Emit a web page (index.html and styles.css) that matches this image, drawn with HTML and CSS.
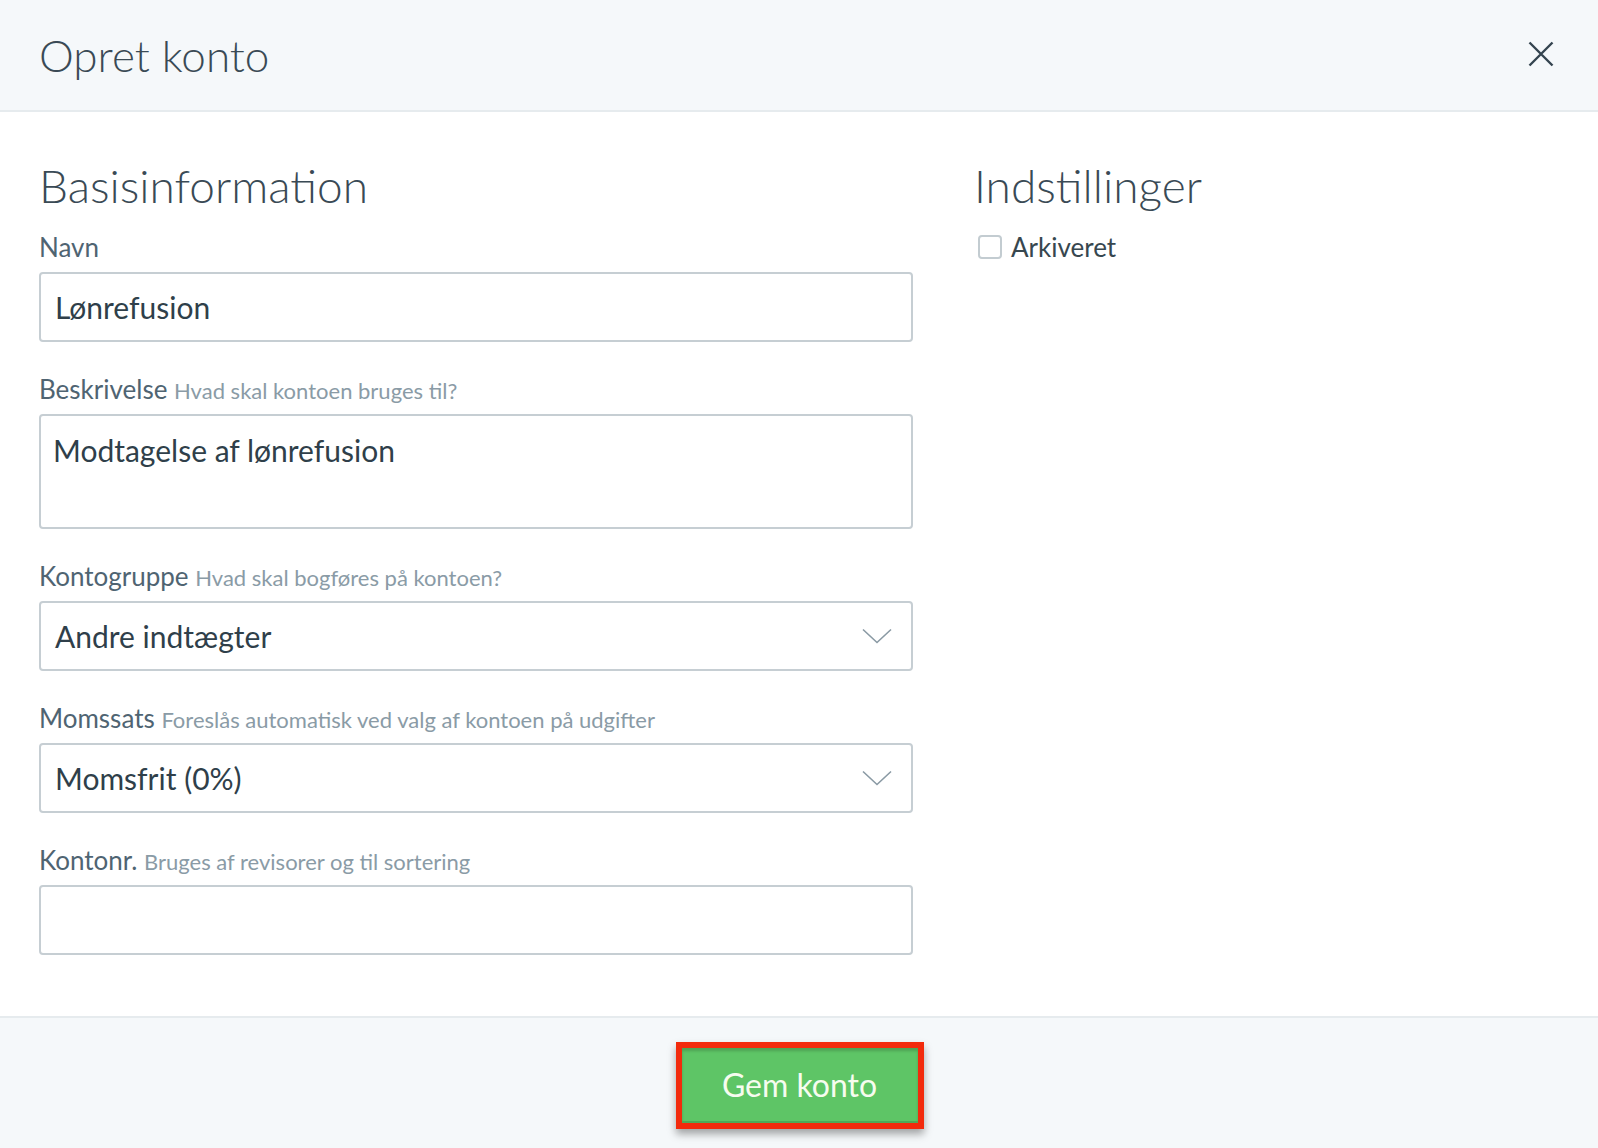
FILE: index.html
```html
<!DOCTYPE html>
<html lang="da">
<head>
<meta charset="utf-8">
<title>Opret konto</title>
<link rel="stylesheet" href="styles.css">
</head>
<body>
<div class="modal">
  <header class="modal-header">
    <h1 class="modal-title">Opret konto</h1>
    <button class="close" aria-label="Luk">
      <svg width="26" height="26" viewBox="0 0 26 26"><path d="M1.5 1.5 L24.5 24.5 M24.5 1.5 L1.5 24.5" stroke="#34444f" stroke-width="2.4" fill="none"/></svg>
    </button>
  </header>
  <main class="modal-body">
    <section class="col-left">
      <h2 class="section-title">Basisinformation</h2>
      <div class="field">
        <label class="label">Navn</label>
        <div class="input">Lønrefusion</div>
      </div>
      <div class="field">
        <label class="label">Beskrivelse <span class="hint">Hvad skal kontoen bruges til?</span></label>
        <div class="input textarea">Modtagelse af lønrefusion</div>
      </div>
      <div class="field">
        <label class="label">Kontogruppe <span class="hint">Hvad skal bogføres på kontoen?</span></label>
        <div class="input select">Andre indtægter
          <svg class="chevron" width="30" height="16" viewBox="0 0 30 16"><path d="M1 1.5 L15 14.5 L29 1.5" stroke="#8a9aa4" stroke-width="1.6" fill="none"/></svg>
        </div>
      </div>
      <div class="field">
        <label class="label">Momssats <span class="hint">Foreslås automatisk ved valg af kontoen på udgifter</span></label>
        <div class="input select">Momsfrit (0%)
          <svg class="chevron" width="30" height="16" viewBox="0 0 30 16"><path d="M1 1.5 L15 14.5 L29 1.5" stroke="#8a9aa4" stroke-width="1.6" fill="none"/></svg>
        </div>
      </div>
      <div class="field">
        <label class="label">Kontonr. <span class="hint">Bruges af revisorer og til sortering</span></label>
        <div class="input"></div>
      </div>
    </section>
    <section class="col-right">
      <h2 class="section-title">Indstillinger</h2>
      <div class="check-row">
        <span class="checkbox"></span>
        <span class="check-label">Arkiveret</span>
      </div>
    </section>
  </main>
  <footer class="modal-footer">
    <div class="highlight">
      <button class="btn-save">Gem konto</button>
    </div>
  </footer>
</div>
</body>
</html>
```

FILE: styles.css
```css
html, body {
  margin: 0;
  padding: 0;
  height: 100%;
}
body {
  font-family: "Lato", "Open Sans", "Liberation Sans", sans-serif;
  color: #37474f;
  background: #ffffff;
}
.modal {
  display: flex;
  flex-direction: column;
  height: 1148px;
}
.modal-header {
  height: 110px;
  flex: none;
  display: flex;
  align-items: center;
  justify-content: space-between;
  padding: 0 44px 0 39px;
  background: #f5f8fa;
  border-bottom: 2px solid #e6ebee;
}
.modal-title {
  margin: 0;
  font-weight: 300;
  font-size: 44px;
  line-height: 56px;
  color: #3a4a55;
}
.close {
  border: 0;
  background: transparent;
  padding: 0;
  display: flex;
  margin-top: -2px;
}
.modal-body {
  flex: 1;
  display: flex;
  gap: 61px;
  padding: 46px 39px 0 39px;
}
.col-left {
  width: 874px;
  flex: none;
}
.col-right {
  flex: 1;
}
.section-title {
  margin: 0 0 18px 0;
  font-weight: 300;
  font-size: 46px;
  line-height: 56px;
  color: #3a4a55;
}
.field {
  margin-bottom: 32px;
}
.label {
  display: block;
  font-size: 26px;
  line-height: 30px;
  height: 30px;
  margin-bottom: 10px;
  color: #4f6472;
}
.hint {
  font-size: 22px;
  line-height: 1;
  color: #8a9ba6;
}
.input {
  box-sizing: border-box;
  height: 70px;
  border: 2px solid #c6ced3;
  border-radius: 4px;
  padding: 0 14px;
  display: flex;
  align-items: center;
  font-size: 30px;
  color: #2f3f4a;
  background: #fff;
}
.textarea {
  height: 115px;
  align-items: flex-start;
  padding: 15px 12px;
  line-height: 38px;
}
.select {
  justify-content: space-between;
  padding-right: 19px;
}
.chevron {
  flex: none;
}
.check-row {
  display: flex;
  align-items: center;
  height: 30px;
  gap: 9px;
  padding-left: 4px;
  margin-top: 2px;
}
.checkbox {
  box-sizing: border-box;
  width: 24px;
  height: 24px;
  border: 2px solid #c3ccd1;
  border-radius: 4px;
  background: #fff;
}
.check-label {
  font-size: 26px;
  color: #37474f;
}
.modal-footer {
  height: 130px;
  flex: none;
  background: #f5f8fa;
  border-top: 2px solid #e6ebee;
  display: flex;
  align-items: center;
  justify-content: center;
}
.highlight {
  border: 6px solid #f22a0c;
  box-shadow: 0 5px 8px rgba(0, 0, 0, 0.35);
  display: flex;
  margin-left: 1px;
  margin-top: 5px;
}
.btn-save {
  width: 236px;
  height: 75px;
  border: 0;
  border-bottom: 2px solid #4ea957;
  box-shadow: inset 0 3px 3px rgba(0, 0, 0, 0.18);
  background: #5ec566;
  color: #f6fcef;
  font-family: inherit;
  font-size: 32px;
  padding: 0;
}
```
